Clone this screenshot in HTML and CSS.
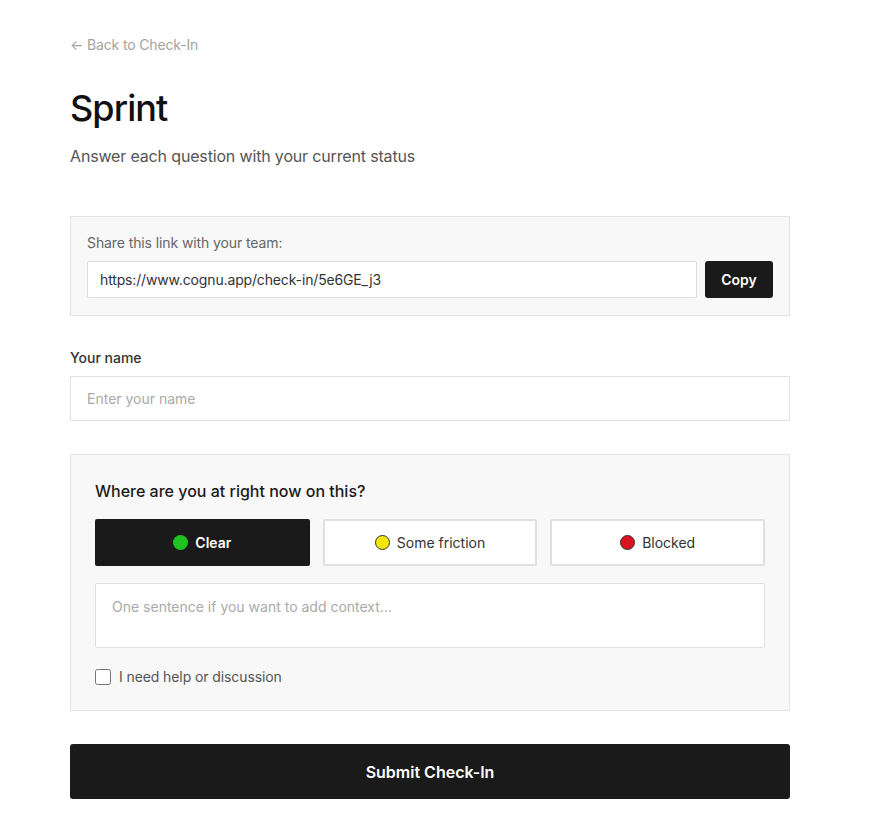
FILE: index.html
```html
<!DOCTYPE html>
<html lang="en">
<head>
<meta charset="utf-8">
<title>Sprint Check-In</title>
<link rel="stylesheet" href="styles.css">
</head>
<body>
<main class="page">
  <a class="back" href="#">← Back to Check-In</a>
  <h1 class="title">Sprint</h1>
  <p class="subtitle">Answer each question with your current status</p>

  <section class="share">
    <div class="share-label">Share this link with your team:</div>
    <div class="share-row">
      <input class="share-input" type="text" value="https://www.cognu.app/check-in/5e6GE_j3" readonly>
      <button class="copy-btn" type="button">Copy</button>
    </div>
  </section>

  <label class="field-label" for="name">Your name</label>
  <input class="name-input" id="name" type="text" placeholder="Enter your name">

  <section class="question">
    <h2 class="q-title">Where are you at right now on this?</h2>
    <div class="options">
      <button class="opt opt-active" type="button"><span class="dot dot-green"></span>Clear</button>
      <button class="opt" type="button"><span class="dot dot-yellow"></span>Some friction</button>
      <button class="opt" type="button"><span class="dot dot-red"></span>Blocked</button>
    </div>
    <textarea class="context" placeholder="One sentence if you want to add context..."></textarea>
    <label class="check-row"><input type="checkbox" class="check"><span>I need help or discussion</span></label>
  </section>

  <button class="submit" type="button">Submit Check-In</button>
</main>
</body>
</html>
```

FILE: styles.css
```css
* { box-sizing: border-box; }
body {
  margin: 0;
  background: #fff;
  font-family: Inter, "Noto Sans", "Liberation Sans", sans-serif;
  color: #1a1a1a;
}
.page {
  width: 860px;
  padding: 35px 70px 40px;
  display: flex;
  flex-direction: column;
  align-items: stretch;
}
.page > * { width: 720px; }
.back {
  font-size: 14px;
  line-height: 20px;
  color: #a3a3a3;
  text-decoration: none;
  letter-spacing: -0.15px;
}
.title {
  margin: 31px 0 0;
  font-size: 36px;
  line-height: 44px;
  font-weight: 500;
  color: #111;
  letter-spacing: -0.9px;
}
.subtitle {
  margin: 14px 0 0;
  font-size: 16px;
  line-height: 24px;
  color: #555;
  letter-spacing: -0.16px;
}
.share {
  margin-top: 48px;
  background: #f8f8f8;
  border: 1px solid #e4e4e4;
  padding: 16px 16px 17px;
}
.share-label {
  font-size: 14px;
  line-height: 20px;
  color: #666;
  letter-spacing: -0.1px;
}
.share-row {
  margin-top: 8px;
  display: flex;
  gap: 8px;
}
.share-input {
  flex: 1;
  height: 37px;
  border: 1px solid #dcdcdc;
  border-radius: 2px;
  background: #fff;
  padding: 0 12px;
  font: inherit;
  font-size: 14px;
  color: #333;
  letter-spacing: -0.15px;
  outline: none;
}
.copy-btn {
  width: 68px;
  height: 37px;
  border: none;
  border-radius: 3px;
  background: #1a1a1a;
  color: #fff;
  font: inherit;
  font-size: 14px;
  font-weight: 600;
}
.field-label {
  margin-top: 32px;
  font-size: 14px;
  line-height: 20px;
  font-weight: 500;
  color: #333;
}
.name-input {
  margin-top: 8px;
  height: 45px;
  border: 1px solid #e0e0e0;
  background: #fff;
  padding: 0 16px;
  font: inherit;
  font-size: 14px;
  outline: none;
}
.name-input::placeholder, .context::placeholder { color: #aaa; }
.question {
  margin-top: 33px;
  background: #f8f8f8;
  border: 1px solid #e4e4e4;
  padding: 24px 24px 23px;
  display: flex;
  flex-direction: column;
}
.q-title {
  margin: 0;
  font-size: 16px;
  line-height: 24px;
  font-weight: 500;
  color: #1a1a1a;
}
.options {
  margin-top: 16px;
  display: grid;
  grid-template-columns: repeat(3, 1fr);
  gap: 13px;
}
.opt {
  height: 47px;
  display: flex;
  align-items: center;
  justify-content: center;
  gap: 7px;
  background: #fff;
  border: 2px solid #e0e0e0;
  border-radius: 2px;
  font: inherit;
  font-size: 14px;
  color: #333;
}
.opt-active {
  background: #1a1a1a;
  border-color: #1a1a1a;
  color: #fff;
  font-weight: 600;
}
.dot {
  width: 15px;
  height: 15px;
  border-radius: 50%;
  display: inline-block;
}
.dot-green { background: #1fc21f; }
.dot-yellow { background: #f2e60a; border: 1px solid #333; }
.dot-red { background: #d9141e; border: 1px solid #333; }
.context {
  margin-top: 17px;
  height: 65px;
  border: 1px solid #e0e0e0;
  border-radius: 2px;
  background: #fff;
  padding: 14px 16px;
  font: inherit;
  font-size: 14px;
  resize: none;
  outline: none;
}
.check-row {
  margin-top: 19px;
  display: flex;
  align-items: center;
  gap: 8px;
  font-size: 14px;
  line-height: 20px;
  color: #555;
  letter-spacing: -0.1px;
}
.check {
  margin: 0;
  width: 16px;
  height: 16px;
}
.submit {
  margin-top: 33px;
  height: 55px;
  border: none;
  border-radius: 3px;
  background: #1a1a1a;
  color: #fff;
  font: inherit;
  font-size: 16px;
  font-weight: 600;
}
```
